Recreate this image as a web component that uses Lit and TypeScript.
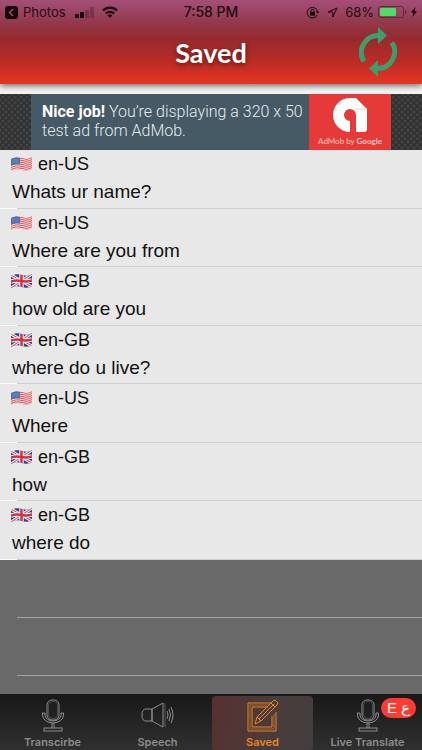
import { LitElement, html, css, svg } from "lit";
import { customElement, property, state } from "lit/decorators.js";
import { classMap } from "lit/directives/class-map.js";

interface Phrase {
  lang: "en-US" | "en-GB";
  text: string;
}

const PHRASES: Phrase[] = [
  { lang: "en-US", text: "Whats ur name?" },
  { lang: "en-US", text: "Where are you from" },
  { lang: "en-GB", text: "how old are you" },
  { lang: "en-GB", text: "where do u live?" },
  { lang: "en-US", text: "Where" },
  { lang: "en-GB", text: "how" },
  { lang: "en-GB", text: "where do" },
];

// Waving outline shared by both flags.
const FLAG_SHAPE = "M0 2C4 0 7 0 11 1S18 2 21 0V12C18 14 15 14 11 13S4 12 0 14Z";

@customElement("status-bar")
class StatusBar extends LitElement {
  static styles = css`
    :host {
      display: grid;
      grid-template-columns: 1fr auto 1fr;
      align-items: center;
      height: 24px;
      padding: 0 5px;
      color: #1c0c12;
      font: 400 13px/16px Inter, "Liberation Sans", sans-serif;
    }
    .side {
      display: flex;
      align-items: center;
    }
    .end {
      justify-content: flex-end;
    }
    .time {
      font-size: 14px;
      font-weight: 500;
    }
    .app {
      margin: 0 9px 0 5px;
    }
    .wifi {
      margin-left: 8px;
    }
    .arrow {
      margin: 0 7px 0 8px;
    }
    .battery {
      margin: 0 4px;
    }
    svg {
      display: block;
      flex: none;
    }
  `;

  render() {
    return html`
      <div class="side">
        <svg width="13" height="13" viewBox="0 0 13 13">
          <rect width="13" height="13" rx="3" fill="#14080c" />
          <path d="M8 3 4.500 6.500 8 10" fill="none" stroke="#a2486a" stroke-width="1.500" />
        </svg>
        <span class="app">Photos</span>
        <svg width="19" height="11" viewBox="0 0 19 11" fill="#14080c">
          <rect x="0" y="7" width="4" height="4" rx="1" />
          <rect x="5" y="5" width="4" height="6" rx="1" />
          <rect x="10" y="3" width="4" height="8" rx="1" opacity=".25" />
          <rect x="15" y="0" width="4" height="11" rx="1" opacity=".25" />
        </svg>
        <svg class="wifi" width="16" height="12" viewBox="0 0 16 12" fill="none" stroke="#14080c" stroke-width="2.200">
          <path d="M1 4.500a10 10 0 0 1 14 0" />
          <path d="M3.800 7.500a6 6 0 0 1 8.400 0" />
          <path d="M8 11.700 5.700 9.400a3.300 3.300 0 0 1 4.600 0Z" fill="#14080c" stroke="none" />
        </svg>
      </div>
      <span class="time">7:58 PM</span>
      <div class="side end">
        <svg width="13" height="13" viewBox="0 0 13 13" fill="none" stroke="#14080c">
          <path d="M11.200 9A5.300 5.300 0 1 1 11.700 6" />
          <path d="M10 5.500h3.400l-1.700 2.300Z" fill="#14080c" stroke="none" />
          <rect x="4" y="6" width="5" height="3.600" fill="#14080c" stroke="none" />
          <path d="M5 6V4.800a1.500 1.500 0 0 1 3 0V6" />
        </svg>
        <svg class="arrow" width="11" height="11" viewBox="0 0 11 11" fill="none" stroke="#14080c">
          <path d="M10 1 1 5h4.800v5Z" />
        </svg>
        <span>68%</span>
        <svg class="battery" width="29" height="12" viewBox="0 0 29 12">
          <rect x=".5" y=".5" width="25" height="11" rx="2.500" fill="none" stroke="#5c2a3c" />
          <rect x="2" y="2" width="16" height="8" rx="1" fill="#4cdf64" />
          <path d="M27 4v4q1.500-.5 1.500-2T27 4" fill="#5c2a3c" />
        </svg>
        <svg width="6" height="10" viewBox="0 0 6 10" fill="#14080c">
          <path d="M4.500 0 0 5.500h2.500L1.500 10 6 4.300H3.500Z" />
        </svg>
      </div>
    `;
  }
}

@customElement("ad-banner")
class AdBanner extends LitElement {
  static styles = css`
    :host {
      display: flex;
      justify-content: center;
      height: 56px;
      background-color: #303030;
      background-image: radial-gradient(circle, #444 1px, transparent 2px),
        radial-gradient(circle, #444 1px, transparent 2px);
      background-size: 6px 6px;
      background-position: 0 0, 3px 3px;
    }
    .ad {
      display: flex;
      width: 360px;
      background: #465a65;
      color: #e4ecf0;
      text-decoration: none;
      font: 300 16px/19px Roboto, sans-serif;
      white-space: nowrap;
    }
    .copy {
      flex: 1;
      padding: 8px 0 0 11px;
    }
    strong {
      font-weight: 700;
      color: #fff;
    }
    .brand {
      display: flex;
      flex-direction: column;
      align-items: center;
      width: 82px;
      padding-top: 4px;
      box-sizing: border-box;
      background: #e53a37;
      color: #f9c9c4;
      font: 400 8px/16px Lato, sans-serif;
    }
    b {
      font-weight: 700;
    }
    svg {
      display: block;
    }
  `;

  render() {
    return html`
      <a class="ad" href="#admob">
        <span class="copy"><strong>Nice job!</strong> You’re displaying a 320 x 50<br />test ad from AdMob.</span>
        <span class="brand">
          <svg width="34" height="35" viewBox="0 0 34 35">
            <path
              d="M17 0H23L34 11V31Q34 34 31 34H23V17A6 6 0 1 0 17 23V34A17 17 0 0 1 17 0Z"
              fill="#fff"
            />
            <path d="M23 11H34" stroke="#e4d4d4" />
          </svg>
          <span>AdMob by <b>Google</b></span>
        </span>
      </a>
    `;
  }
}

@customElement("lang-flag")
class LangFlag extends LitElement {
  @property() lang = "en-US";

  static styles = css`
    :host {
      display: block;
    }
    svg {
      display: block;
    }
  `;

  private us() {
    return svg`
      <rect width="21" height="14" fill="#f4e6e6" />
      ${[0, 1, 2, 3, 4, 5, 6].map(
        (i) => svg`<path d="M0 ${2.5 + i * 2}C4 ${0.5 + i * 2} 7 ${0.5 + i * 2} 11 ${1.5 + i * 2}S18 ${
          2.5 + i * 2
        } 21 ${0.5 + i * 2}" fill="none" stroke="#d8494f" />`
      )}
      <path d="M0 1C4 0 6 0 9 1V7.500C6 7 3 7 0 8.500Z" fill="#4a72b0" />
      <path d="M1.500 3H8M1.500 5H8" stroke="#a9bfe0" stroke-dasharray="1 1" stroke-width=".6" />
    `;
  }

  private gb() {
    return svg`
      <rect width="21" height="14" fill="#2c4390" />
      <path d="M0 1 21 13M21 0 0 14" stroke="#f2f2f6" stroke-width="3" />
      <path d="M0 1 21 13M21 0 0 14" stroke="#d93a48" stroke-width="1" />
      <path d="M0 7.500Q5 6 10.500 7T21 6.500M10.500 0V14" fill="none" stroke="#f2f2f6" stroke-width="4.500" />
      <path d="M0 7.500Q5 6 10.500 7T21 6.500M10.500 0V14" fill="none" stroke="#d6303f" stroke-width="2.500" />
    `;
  }

  render() {
    return html`
      <svg width="21" height="14" viewBox="0 0 21 14" aria-hidden="true">
        <clipPath id="wave"><path d=${FLAG_SHAPE} /></clipPath>
        <g clip-path="url(#wave)">${this.lang === "en-US" ? this.us() : this.gb()}</g>
      </svg>
    `;
  }
}

const mic = svg`
  <rect x="6" y="1" width="12" height="20" rx="5" />
  <rect x="7.500" y="2.500" width="9" height="17" rx="4" opacity=".4" />
  <path d="M1.500 14v2a10.500 8 0 0 0 21 0v-2h-2.500v2a8 6 0 0 1-16 0v-2Z" />
  <path d="M11 24v5M13 24v5" />
  <rect x="3" y="29" width="18" height="3" />
`;

const speaker = svg`
  <path d="M11 10H5Q1 10 1 16T5 22H11Z" />
  <path d="M11 10 22 4V28L11 22Z" />
  <path d="M24 4V28" opacity=".5" />
  <path d="M26 12q2 4 0 8M28 10q3 6 0 12M30 8q4 8 0 16" />
`;

const note = svg`
  <path d="M24 4H1V32H29V13" />
  <path d="M22 6H3V30H27V15" opacity=".6" />
  <path d="M21 8H5V28H25V17" />
  <path d="M8 25 10 18 26 2 28 1 31 4 30 6 14 22Z" />
  <path d="M10 18 14 22M24 4 28 8M12 20 27 5" />
`;

const TABS = [
  { id: "transcribe", label: "Transcirbe", icon: mic, width: 24 },
  { id: "speech", label: "Speech", icon: speaker, width: 33 },
  { id: "saved", label: "Saved", icon: note, width: 32 },
  { id: "live", label: "Live Translate", icon: mic, width: 24, badge: "E ع" },
];

@customElement("tab-bar")
class TabBar extends LitElement {
  @state() private active = "saved";

  static styles = css`
    nav {
      display: grid;
      grid-template-columns: repeat(4, 1fr);
      height: 56px;
      padding: 1px 2px 0 0;
      box-sizing: border-box;
      background: linear-gradient(#181818, #303030);
    }
    button {
      position: relative;
      display: flex;
      flex-direction: column;
      align-items: center;
      margin: 1px 2px 0;
      padding: 3px 0 0;
      border: 0;
      border-radius: 4px;
      background: none;
      color: #8c8c8c;
      font: 600 11px/14px Inter, "Liberation Sans", sans-serif;
      white-space: nowrap;
    }
    .active {
      background: linear-gradient(100deg, #57302f, #4a3c3c 60%, #443e3e);
      color: #e8861c;
    }
    svg {
      display: block;
      margin-bottom: 3px;
      fill: none;
      stroke: currentColor;
    }
    .badge {
      position: absolute;
      top: 2px;
      right: 2px;
      min-width: 35px;
      height: 20px;
      border-radius: 10px;
      background: #fe3b30;
      color: #fff;
      font: 400 15px/20px "Liberation Sans", "DejaVu Sans", sans-serif;
      text-align: center;
    }
  `;

  render() {
    return html`
      <nav>
        ${TABS.map(
          (t) => html`
            <button class=${classMap({ active: t.id === this.active })} @click=${() => (this.active = t.id)}>
              <svg width=${t.width} height="33" viewBox="0 0 ${t.width} 33" aria-hidden="true">${t.icon}</svg>
              ${t.label}
              ${t.badge ? html`<span class="badge">${t.badge}</span>` : ""}
            </button>
          `
        )}
      </nav>
    `;
  }
}

@customElement("app-root")
class AppRoot extends LitElement {
  static styles = css`
    :host {
      display: flex;
      flex-direction: column;
      min-height: 100vh;
      background: #696969;
    }
    .top {
      position: relative;
      height: 84px;
      background: linear-gradient(#a44f78, #93394e 22px, #942a2e 38px, #b82c26 60px, #e63422);
      box-shadow: 0 2px 6px rgba(0, 0, 0, 0.55);
    }
    .title {
      display: grid;
      grid-template-columns: 1fr auto 1fr;
      align-items: center;
      height: 56px;
      padding: 0 25px;
    }
    h1 {
      grid-column: 2;
      margin: 0;
      padding-top: 2px;
      color: #fff;
      font: 700 27px/32px Lato, sans-serif;
      text-shadow: 0 2px 5px rgba(0, 0, 0, 0.5);
    }
    .refresh {
      justify-self: end;
      padding: 0;
      border: 0;
      background: none;
    }
    .refresh svg {
      display: block;
    }
    .ad-slot {
      padding-top: 10px;
      background: #f4f4f4;
    }
    .list {
      margin: 0;
      padding: 0;
      list-style: none;
      background: #e8e8e8;
      color: #111;
      font: 400 19px/28px "Liberation Sans", Arial, sans-serif;
    }
    .row,
    .blank {
      height: 58px;
      box-sizing: border-box;
      border-bottom: 1px solid;
      border-image: linear-gradient(90deg, #fafafa 18px, #cfcfd1 18px) 1;
    }
    .row:nth-child(odd) {
      height: 59px;
    }
    .row {
      padding-left: 11px;
    }
    .lang {
      display: flex;
      align-items: center;
      gap: 6px;
      font-size: 18px;
    }
    .text {
      margin: 0;
      padding-left: 1px;
    }
    .empty {
      flex: 1;
    }
    .blank {
      border-image: linear-gradient(90deg, transparent 18px, #a4a4a6 18px) 1;
    }
  `;

  render() {
    return html`
      <header class="top">
        <status-bar></status-bar>
        <div class="title">
          <h1>Saved</h1>
          <button class="refresh" aria-label="Refresh">
            <svg width="38" height="50" viewBox="0 0 38 50">
              <g fill="none" stroke="#419c6c" stroke-width="5">
                <path d="M5 34.500A17 17 0 0 1 20 8.500" />
                <path d="M33 15.500A17 17 0 0 1 18 41.500" />
              </g>
              <path d="M19 0 28 8.500 19 17ZM19 50 10 41.500 19 33Z" fill="#419c6c" />
            </svg>
          </button>
        </div>
      </header>
      <div class="ad-slot"><ad-banner></ad-banner></div>
      <ul class="list">
        ${PHRASES.map(
          (p) => html`
            <li class="row">
              <div class="lang"><lang-flag lang=${p.lang}></lang-flag>${p.lang}</div>
              <p class="text">${p.text}</p>
            </li>
          `
        )}
      </ul>
      <div class="empty">
        <div class="blank"></div>
        <div class="blank"></div>
      </div>
      <tab-bar></tab-bar>
    `;
  }
}
